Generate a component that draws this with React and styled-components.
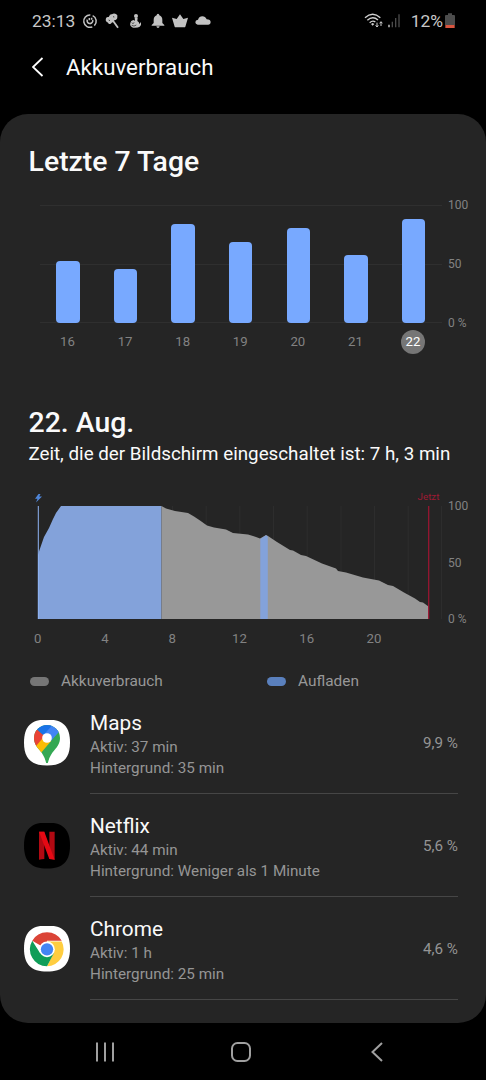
import styled, { createGlobalStyle } from 'styled-components';

const days = [
    { day: 16, value: 53 },
    { day: 17, value: 46 },
    { day: 18, value: 84.5 },
    { day: 19, value: 69 },
    { day: 20, value: 81 },
    { day: 21, value: 58.5 },
    { day: 22, value: 89, active: true },
];

const hours = [0, 4, 8, 12, 16, 20];

const apps = [
    { name: 'Maps', active: '37 min', background: '35 min', usage: '9,9 %', Icon: MapsIcon },
    { name: 'Netflix', active: '44 min', background: 'Weniger als 1 Minute', usage: '5,6 %', Icon: NetflixIcon, dark: true },
    { name: 'Chrome', active: '1 h', background: '25 min', usage: '4,6 %', Icon: ChromeIcon },
];

function MapsIcon() {
    return (
        <svg width='46' height='46' viewBox='0 0 138 138'>
            <defs>
                <clipPath id='pin'>
                    <path d='M69 15a39 39 0 0 1 39 39c0 15-7 25-17 37-9 11-14 19-18 33-1 5-2 6-4 6s-3-1-4-6c-4-14-9-22-18-33C37 79 30 69 30 54a39 39 0 0 1 39-39z' />
                </clipPath>
            </defs>
            <g clipPath='url(#pin)'>
                <rect width='138' height='138' fill='#34a853' />
                <path d='M20 96 57 43 82 62 45 106z' fill='#fbbc04' />
                <path d='M20 92V25l20 4 22 18-25 30z' fill='#ea4335' />
                <path d='M58 43 82 12 112 38 104 37 81 63z' fill='#4285f4' />
                <path d='M38 27 69 0 86 14 58 46z' fill='#1a73e8' />
            </g>
            <circle cx='69' cy='54' r='14.5' fill='#fff' />
        </svg>
    );
}

function NetflixIcon() {
    return (
        <svg width='46' height='46' viewBox='0 0 138 138'>
            <path d='M45 26h16v82q-8 0-16 2zM76 26h16v84q-8-2-16-2z' fill='#b00912' />
            <path d='M45 26h16l31 84q-8-2-16-2z' fill='#e50914' />
        </svg>
    );
}

function ChromeIcon() {
    return (
        <svg width='46' height='46' viewBox='0 0 138 138'>
            <path d='M69 70 24.8 44.5A51 51 0 0 1 113.2 44.5H69z' fill='#db4437' />
            <path d='M69 46.5h44.2A51 51 0 0 1 69 121L89 81z' fill='#ffcd40' />
            <path d='M48.5 82 24.8 44.5A51 51 0 0 0 69 121L89.5 82z' fill='#0f9d58' />
            <circle cx='69' cy='70' r='23.5' fill='#fff' />
            <circle cx='69' cy='70' r='18.5' fill='#4285f4' />
        </svg>
    );
}

const Glyph = ({ children }) => (
    <svg width='16' height='16' viewBox='0 0 48 48' fill='#c2c2c2' stroke='none'>
        {children}
    </svg>
);

const App = () => {
    return (
        <Screen>
            <GlobalStyle />
            <StatusBar>
                <Clock>23:13</Clock>
                <Notifications>
                    <Glyph>
                        <g fill='none' stroke='#c2c2c2' strokeWidth='4.6'>
                            <path d='M25 6A18.500 18.500 0 1 0 31 41.500' />
                            <path d='M32 8A18.500 18.500 0 0 1 37 38' />
                            <path d='M16 20a8.500 8.500 0 1 0 16 1' />
                            <path d='M22 15v7M29 14v6' />
                        </g>
                    </Glyph>
                    <Glyph>
                        <path d='M13 9Q14 3 21 4q5-4 12-1 6 3 4 10 0 8-9 9-3 7-8 7-3 6-9 3-2-5-6-5-5-5-2-11 2-5 8-4z' />
                        <path d='m24 23 15 21' stroke='#c2c2c2' strokeWidth='5.500' />
                        <path d='m11 21 4 2m9-12 4 1' stroke='#000' strokeWidth='2' />
                    </Glyph>
                    <Glyph>
                        <circle cx='27' cy='9' r='6' />
                        <path d='M23 14h9l-1 10q6 3 6 9l5-6q2 9-4 14-5 4-20 3-11-4-8-14 1-8 9-9l5 2z' />
                        <path d='M14 29q3 5 8 0m-8 8q7 5 14-1' fill='none' stroke='#000' strokeWidth='1.800' />
                    </Glyph>
                    <Glyph>
                        <path d='M24 2q4 0 4 5 9 3 9 14v9l6 6v2H5v-2l6-6v-9q0-11 9-14 0-5 4-5zM19 40h10q-1 5-5 5t-5-5z' />
                    </Glyph>
                    <Glyph>
                        <path d='M0 14 14 18 24 4 34 18 48 14 40 41Q39 43 37 43H11Q9 43 8 41z' />
                    </Glyph>
                    <Glyph>
                        <path d='M8 35q-7-1-7-7 0-7 8-8Q13 10 22 10q9 0 13 9 12 0 12 9 0 7-7 7z' />
                    </Glyph>
                </Notifications>
                <Signals>
                    <svg width='38' height='16' viewBox='0 0 114 48'>
                        <g fill='none' stroke='#d0d0d0' strokeWidth='4.200'>
                            <path d='M3 14Q26-6 49 14' />
                            <path d='M10 22Q26 7 42 21' />
                            <path d='M17 29Q26 21 34 27' />
                        </g>
                        <path d='m21 33 5-3 5 3-5 5z' fill='#d0d0d0' />
                        <path d='M39 29v12m-4-4 4 5 4-5M51 39V27m-4 4 4-5 4 5' fill='none' stroke='#d0d0d0' strokeWidth='3' />
                        <path d='M75 35v8' stroke='#ddd' strokeWidth='4' />
                        <path d='M85 26v17M95 15v28M105 4v39' stroke='#4b4b4b' strokeWidth='4' />
                    </svg>
                    <Percent>12%</Percent>
                    <svg width='10' height='16' viewBox='0 0 30 48'>
                        <path d='M9 1h12v5h6q3 0 3 3v27H0V9q0-3 3-3h6z' fill='#4c4c4c' />
                        <path d='M1 36h28v9H1z' fill='#d8553f' />
                    </svg>
                </Signals>
            </StatusBar>
            <Header>
                <svg width='12' height='20' viewBox='0 0 12 20' fill='none' stroke='#fff' strokeWidth='1.800'>
                    <path d='M10.500 1 1 10l9.500 9' />
                </svg>
                <h1>Akkuverbrauch</h1>
            </Header>
            <Card>
                <Heading>Letzte 7 Tage</Heading>
                <WeekChart>
                    <Bars>
                        {days.map(({ day, value }) => (
                            <Bar key={day} $value={value} />
                        ))}
                    </Bars>
                    <Scale>
                        <span>100</span>
                        <span>50</span>
                        <span>0 %</span>
                    </Scale>
                </WeekChart>
                <DayLabels>
                    {days.map(({ day, active }) => (
                        <DayLabel key={day} $active={active}>
                            {day}
                        </DayLabel>
                    ))}
                </DayLabels>

                {/* selected day */}
                <DayHeading>22. Aug.</DayHeading>
                <ScreenTime>Zeit, die der Bildschirm eingeschaltet ist: 7 h, 3 min</ScreenTime>
                <DayChart>
                    <svg width='412' height='132' viewBox='30 490 412 132'>
                        <path
                            d='M71.5 506v113M105.3 506v113M139 506v113M172.5 506v113M206.2 506v113M239.8 506v113M273.5 506v113M307.2 506v113M341 506v113M374.5 506v113M408.2 506v113M441.5 506v113'
                            stroke='#2d2d2d'
                        />
                        <path d='M38 619V555l1.5-5L44 537l5-9 4-9 3-6 5-7h100.5v113z' fill='#83a2da' />
                        <path
                            d='M161.5 619V506l4.5 2.5 9 2.5 13 2 6 3.5 6 4 7 5 7 2 12 2 7 3.500 15 1.500 5 1.500 7 2.500 6-3.500 2 1 9 6 13 8 3 .5 8 4.500 5 1 16 7.500 14 5 2 2.500 8 1.500 17 5 16 3 9 4.500 5 1 11 6.500 11 6 5 3.500 3 .5 5.500 4V619z'
                            fill='#989898'
                        />
                        <path d='M260.300 619v-80l5.700-3.800 1.800 1.200V619z' fill='#83a2da' />
                        <path d='M38.300 506v113' stroke='#8fb4f4' strokeWidth='1' />
                        <path d='M428.700 506v113' stroke='#a01532' strokeWidth='1.200' />
                        <path d='m38.500 494-3.500 4.800h2.500L36 502.500l6-6h-2.800l1.300-2.500z' fill='#4f86d9' />
                        <text x='428.500' y='500.300' textAnchor='middle' fontSize='9.800' fill='#9e1a33'>
                            Jetzt
                        </text>
                    </svg>
                    <Scale>
                        <span>100</span>
                        <span>50</span>
                        <span>0 %</span>
                    </Scale>
                </DayChart>
                <HourLabels>
                    {hours.map((hour) => (
                        <span key={hour}>{hour}</span>
                    ))}
                </HourLabels>
                <Legend>
                    <LegendItem $color='#767676'>Akkuverbrauch</LegendItem>
                    <LegendItem $color='#5a80bd'>Aufladen</LegendItem>
                </Legend>

                <AppList>
                    {apps.map(({ name, active, background, usage, Icon, dark }) => (
                        <AppRow key={name}>
                            <AppIcon $dark={dark}>
                                <Icon />
                            </AppIcon>
                            <AppInfo>
                                <div>
                                    <h3>{name}</h3>
                                    <p>Aktiv: {active}</p>
                                    <p>Hintergrund: {background}</p>
                                </div>
                                <Usage>{usage}</Usage>
                            </AppInfo>
                        </AppRow>
                    ))}
                </AppList>
            </Card>
            <NavBar>
                <svg width='20' height='20' viewBox='0 0 20 20' stroke='#a0a0a0' strokeWidth='2'>
                    <path d='M2 .5v19M10 .5v19M18 .5v19' />
                </svg>
                <svg width='20' height='20' viewBox='0 0 20 20' fill='none' stroke='#a0a0a0' strokeWidth='2'>
                    <rect x='1' y='1' width='18' height='18' rx='5.500' />
                </svg>
                <svg width='16' height='20' viewBox='-4 0 16 20' fill='none' stroke='#a0a0a0' strokeWidth='2'>
                    <path d='M11 1 1.500 10l9.500 9' />
                </svg>
            </NavBar>
        </Screen>
    );
};

const GlobalStyle = createGlobalStyle`
  * {
    box-sizing: border-box;
  }
  body {
    margin: 0;
    background: #000;
    font-family: Roboto, sans-serif;
  }
  h1, h2, h3, p {
    margin: 0;
    font-weight: 400;
  }
  svg {
    display: block;
    flex: none;
  }
`;

const Screen = styled.div`
  width: 486px;
  height: 1080px;
  overflow: hidden;
  display: flex;
  flex-direction: column;
  background: #000;
  color: #fafafa;
`;

const StatusBar = styled.div`
  height: 42px;
  padding: 0 31px 0 32px;
  display: flex;
  align-items: center;
  color: #c8c8c8;
  font-size: 17.4px;
`;

const Clock = styled.span`
  width: 50px;
`;

const Notifications = styled.div`
  display: flex;
  gap: 6.5px;
`;

const Signals = styled.div`
  margin-left: auto;
  display: flex;
  align-items: center;
`;

const Percent = styled.span`
  margin: 0 2px 0 9px;
`;

const Header = styled.header`
  height: 72px;
  padding: 15px 0 0 32px;
  display: flex;
  align-items: flex-start;
  gap: 22px;
  h1 {
    font-size: 22.3px;
    line-height: 20px;
  }
`;

const Card = styled.main`
  height: 909px;
  padding: 32px 28px 0;
  border-radius: 28px;
  background: #252525;
`;

const Heading = styled.h2`
  padding-left: 0.6px;
  font-size: 28.4px;
  font-weight: 500;
  line-height: 32px;
`;

const WeekChart = styled.div`
  height: 118px;
  margin: 27px -16px 0 12px;
  display: flex;
`;

const Bars = styled.div`
  flex: none;
  width: 402px;
  padding: 0 16.5px 0 16px;
  display: flex;
  justify-content: space-between;
  align-items: flex-end;
  background:
    linear-gradient(#2f2f2f, #2f2f2f) 0 0 / 100% 1px no-repeat,
    linear-gradient(#2f2f2f, #2f2f2f) 0 50% / 100% 1px no-repeat,
    linear-gradient(#2f2f2f, #2f2f2f) 0 100% / 100% 1px no-repeat;
`;

const Bar = styled.div`
  width: 23.5px;
  height: ${({ $value }) => $value * 1.17}px;
  border-radius: 4px;
  background: #78a9ff;
`;

const Scale = styled.div`
  margin: -7px 0;
  padding-left: 6px;
  display: flex;
  flex-direction: column;
  justify-content: space-between;
  font-size: 12px;
  line-height: 14px;
  white-space: nowrap;
  color: #828282;
`;

const DayLabels = styled.div`
  margin: 7px 33px 0 27.5px;
  display: flex;
  justify-content: space-between;
`;

const DayLabel = styled.span`
  width: 24px;
  height: 24px;
  border-radius: 50%;
  font-size: 13.2px;
  line-height: 24px;
  text-align: center;
  color: ${({ $active }) => ($active ? '#fff' : '#828282')};
  background: ${({ $active }) => ($active ? '#767676' : 'none')};
`;

const DayHeading = styled(Heading)`
  margin-top: 53px;
`;

const ScreenTime = styled.p`
  padding-left: 0.4px;
  font-size: 18.8px;
  line-height: 31px;
  white-space: nowrap;
`;

const DayChart = styled.div`
  height: 132px;
  margin: 20px -16px 0 2px;
  display: flex;
  ${Scale} {
    margin: 9px 0 -4px;
  }
`;

const HourLabels = styled.div`
  margin: 9px 0 0 -7px;
  display: flex;
  font-size: 13.2px;
  line-height: 16px;
  color: #828282;
  span {
    width: 33.6px;
    margin-right: 33.65px;
    text-align: center;
  }
`;

const Legend = styled.div`
  margin-top: 24px;
  display: grid;
  grid-template-columns: 237px 1fr;
`;

const LegendItem = styled.div`
  padding-left: 2px;
  display: flex;
  align-items: center;
  gap: 12px;
  font-size: 15.4px;
  line-height: 20px;
  color: #989898;
  &::before {
    content: '';
    width: 19px;
    height: 9px;
    border-radius: 5px;
    background: ${({ $color }) => $color};
  }
`;

const AppList = styled.div`
  margin: 0 0 0 -4px;
`;

const AppRow = styled.div`
  height: 103px;
  display: flex;
  gap: 20px;
`;

const AppIcon = styled.div`
  width: 46px;
  height: 46px;
  margin-top: 28.5px;
  clip-path: path('M23 0C39 0 46 7 46 23S39 46 23 46 0 39 0 23 7 0 23 0z');
  background: ${({ $dark }) => ($dark ? '#000' : '#fff')};
`;

const AppInfo = styled.div`
  flex: 1;
  padding-top: 19px;
  display: flex;
  justify-content: space-between;
  border-bottom: 1px solid #464646;
  h3 {
    margin-bottom: 1px;
    font-size: 20.8px;
    line-height: 26px;
  }
  p {
    font-size: 15.25px;
    line-height: 21px;
    color: #959595;
  }
`;

const Usage = styled.span`
  margin-top: 24px;
  font-size: 15.2px;
  line-height: 18px;
  color: #959595;
`;

const NavBar = styled.nav`
  flex: 1;
  padding: 0 103px 0 95px;
  display: flex;
  align-items: center;
  justify-content: space-between;
`;

export default App;
